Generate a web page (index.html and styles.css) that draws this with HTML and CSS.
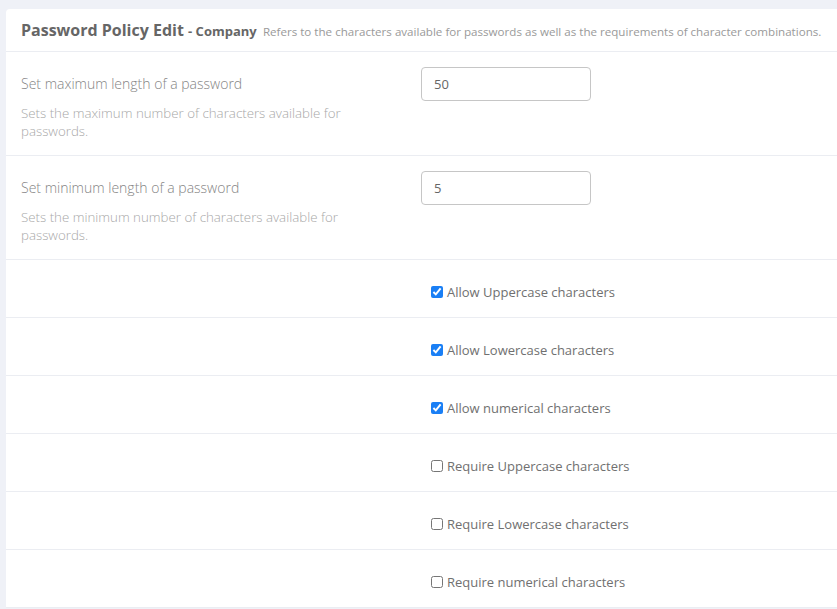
FILE: index.html
```html
<!DOCTYPE html>
<html lang="en">
<head>
    <meta charset="UTF-8">
    <meta name="viewport" content="width=device-width, initial-scale=1.0">
    <title>Password Policy Edit</title>
    <link rel="stylesheet" href="styles.css">
</head>
<body>
    <div class="card">
        <div class="card-header">
            <span class="title">Password Policy Edit</span>
            <span class="subtitle">- Company</span>
            <span class="hint">Refers to the characters available for passwords as well as the requirements of character combinations.</span>
        </div>

        <div class="row">
            <div class="col-label">
                <label for="maxLength">Set maximum length of a password</label>
                <p class="help">Sets the maximum number of characters available for passwords.</p>
            </div>
            <div class="col-field">
                <input type="text" id="maxLength" value="50">
            </div>
        </div>
        <div class="row">
            <div class="col-label">
                <label for="minLength">Set minimum length of a password</label>
                <p class="help">Sets the minimum number of characters available for passwords.</p>
            </div>
            <div class="col-field">
                <input type="text" id="minLength" value="5">
            </div>
        </div>

        <div class="row check-row">
            <div class="col-label"></div>
            <div class="col-field">
                <label class="check"><input type="checkbox" checked> Allow Uppercase characters</label>
            </div>
        </div>
        <div class="row check-row">
            <div class="col-label"></div>
            <div class="col-field">
                <label class="check"><input type="checkbox" checked> Allow Lowercase characters</label>
            </div>
        </div>
        <div class="row check-row">
            <div class="col-label"></div>
            <div class="col-field">
                <label class="check"><input type="checkbox" checked> Allow numerical characters</label>
            </div>
        </div>
        <div class="row check-row">
            <div class="col-label"></div>
            <div class="col-field">
                <label class="check"><input type="checkbox"> Require Uppercase characters</label>
            </div>
        </div>
        <div class="row check-row">
            <div class="col-label"></div>
            <div class="col-field">
                <label class="check"><input type="checkbox"> Require Lowercase characters</label>
            </div>
        </div>
        <div class="row check-row">
            <div class="col-label"></div>
            <div class="col-field">
                <label class="check"><input type="checkbox"> Require numerical characters</label>
            </div>
        </div>
    </div>
</body>
</html>
```

FILE: styles.css
```css
html, body {
    margin: 0;
    overflow: hidden;
}
body {
    background-color: #eff1f7;
    font-family: "Open Sans", "Liberation Sans", sans-serif;
    color: #666;
}
.card {
    background-color: #fff;
    margin: 9px 0 0 6px;
    width: 840px;
    border-radius: 4px 0 0 0;
}
.card-header {
    box-sizing: border-box;
    height: 43px;
    padding: 10px 15px;
    line-height: 22px;
    border-bottom: 1px solid #ebedf2;
    white-space: nowrap;
    overflow: hidden;
}
.card-header .title {
    font-size: 16px;
    font-weight: 700;
    color: #666;
}
.card-header .subtitle {
    font-size: 13px;
    font-weight: 700;
    color: #666;
}
.card-header .hint {
    font-size: 11.6px;
    color: #9a9a9a;
    margin-left: 2px;
}
.row {
    display: grid;
    grid-template-columns: 400px 1fr;
    padding: 15px;
    border-bottom: 1px solid #ebedf2;
}
.col-label {
    padding-right: 40px;
}
.col-label label {
    display: block;
    padding-top: 7px;
    font-size: 14px;
    font-weight: 300;
    line-height: 20px;
    color: #858585;
}
.help {
    margin: 10px 0 0;
    font-size: 13.3px;
    font-weight: 300;
    line-height: 18px;
    color: #a8a8a8;
}
.col-field input[type="text"] {
    box-sizing: border-box;
    width: 170px;
    height: 34px;
    padding: 0 12px;
    border: 1px solid #c6c6c6;
    border-radius: 4px;
    font-family: inherit;
    font-size: 13px;
    color: #666;
    outline: none;
}
.check-row {
    padding: 22px 15px 15px;
}
.check {
    display: flex;
    align-items: center;
    padding-left: 10px;
    font-size: 13px;
    line-height: 20px;
    color: #707070;
}
.check input {
    width: 12px;
    height: 12px;
    margin: 0 4px 0 0;
    accent-color: #1a7ff5;
}
```
